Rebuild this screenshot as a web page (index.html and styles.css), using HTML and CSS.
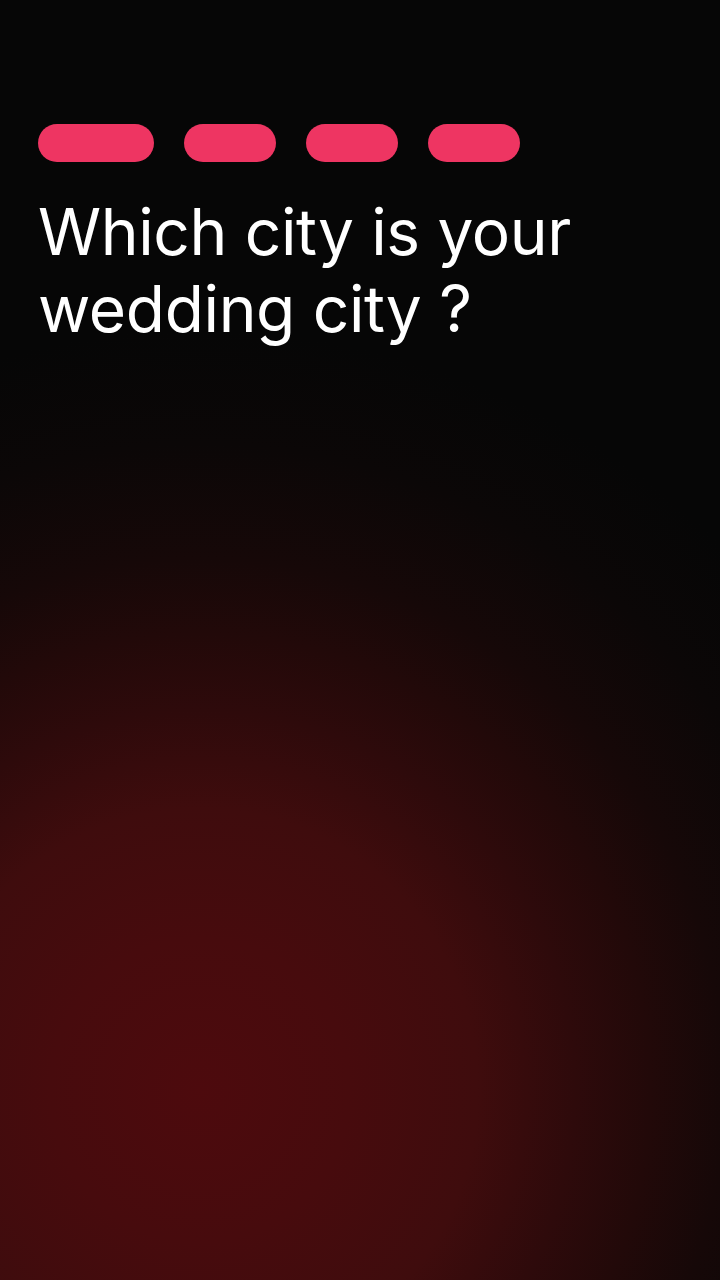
FILE: index.html
```html
<!DOCTYPE html>
<html lang="en">
<head>
<meta charset="utf-8">
<title>Wedding city</title>
<link rel="stylesheet" href="styles.css">
</head>
<body>
<main class="screen">
  <div class="steps">
    <span class="step step-wide"></span>
    <span class="step"></span>
    <span class="step"></span>
    <span class="step"></span>
  </div>
  <h1 class="title">Which city is your wedding city ?</h1>
</main>
</body>
</html>
```

FILE: styles.css
```css
html, body {
  margin: 0;
  padding: 0;
}
body {
  width: 720px;
  height: 1280px;
  overflow: hidden;
  font-family: Inter, "Noto Sans", sans-serif;
  background-color: #060606;
  background-image: radial-gradient(ellipse 750px 760px at 200px 1090px,
    #4d0a0d 0%,
    #470b0d 20%,
    #3f0c0d 37%,
    #2e0a0b 50%,
    #220909 60%,
    #160808 70%,
    #0b0707 85%,
    #060606 100%);
}
.screen {
  box-sizing: border-box;
  height: 1280px;
  padding: 124px 38px 0;
}
.steps {
  display: flex;
  gap: 30px;
}
.step {
  display: block;
  width: 92px;
  height: 38px;
  border-radius: 19px;
  background: #ee3562;
}
.step-wide {
  width: 116px;
}
.title {
  margin: 31px 0 0;
  font-size: 64px;
  line-height: 77px;
  font-weight: 400;
  letter-spacing: -0.35px;
  color: #ffffff;
  width: 560px;
}
```
